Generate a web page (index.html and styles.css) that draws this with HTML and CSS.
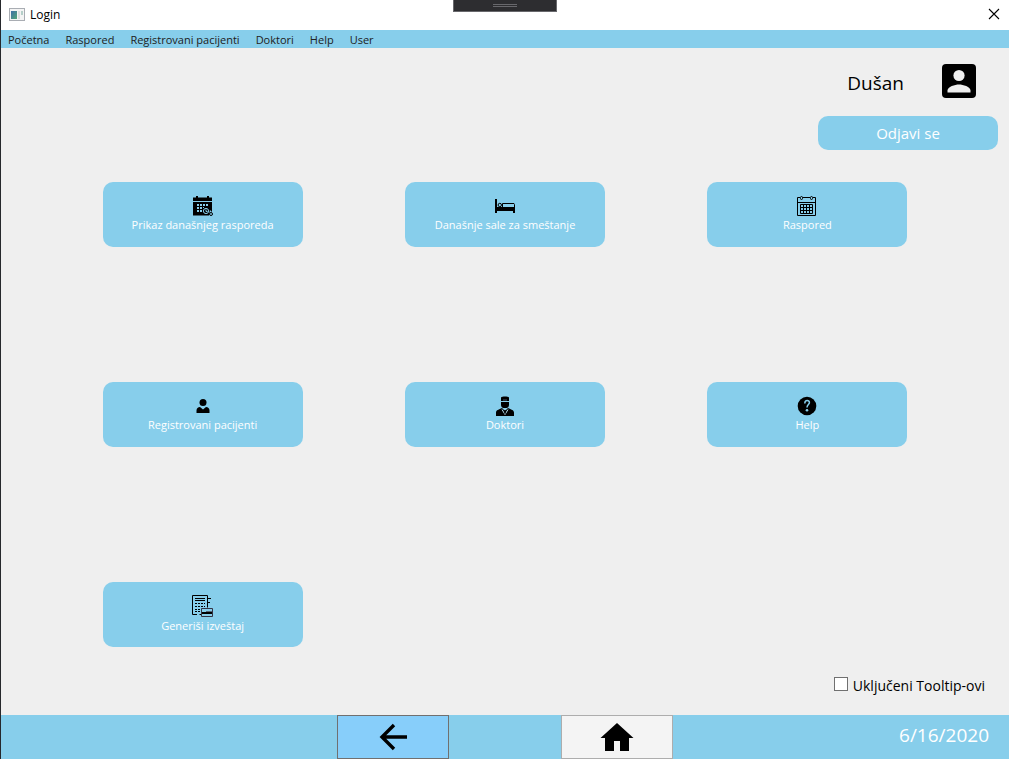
FILE: index.html
```html
<!DOCTYPE html>
<html lang="sr-Latn">
<head>
<meta charset="utf-8">
<title>Login</title>
<link rel="stylesheet" href="styles.css">
</head>
<body>
<div class="window">
  <header class="titlebar">
    <svg class="app-icon" width="16" height="13" viewBox="0 0 16 13" aria-hidden="true">
      <defs><linearGradient id="pane" x1="0" y1="0" x2="1" y2="1"><stop offset="0" stop-color="#3f6fa8"/><stop offset="1" stop-color="#55a777"/></linearGradient></defs>
      <rect x=".5" y=".5" width="15" height="12" fill="#f4f4f4" stroke="#a9adb3"/>
      <rect x="2" y="3" width="6" height="8" fill="url(#pane)"/>
      <rect x="9" y="3" width="2" height="8" fill="#dedede"/>
      <rect x="12" y="3" width="2" height="4" fill="#b5cfc9"/>
    </svg>
    <span class="title">Login</span>
    <button class="close" aria-label="Close"><svg width="12" height="12" viewBox="0 0 12 12"><path d="M1 1l10 10M11 1L1 11" stroke="#000" stroke-width="1.1"/></svg></button>
    <div class="debug-tab"><svg width="24" height="4" viewBox="0 0 24 4"><path d="M0 .5h24M0 2.5h24" stroke="#68686c"/></svg></div>
  </header>
  <nav class="menu">
    <a href="#">Početna</a><a href="#">Raspored</a><a href="#">Registrovani pacijenti</a><a href="#">Doktori</a><a href="#">Help</a><a href="#">User</a>
  </nav>
  <main class="content">
    <section class="account">
      <div class="user">
        <span class="name">Dušan</span>
        <svg width="34" height="34" viewBox="0 0 34 34" aria-hidden="true"><rect width="34" height="34" rx="4"/><circle cx="17" cy="11.500" r="5.600" fill="#efefef"/><path d="M5.500 28.500v-2c0-3.800 7.500-6 11.500-6s11.500 2.200 11.500 6v2z" fill="#efefef"/></svg>
      </div>
      <button class="logout">Odjavi se</button>
    </section>
    <section class="tiles">
      <button class="tile">
        <svg width="20" height="20" viewBox="0 0 20 20" aria-hidden="true"><path d="M0 1.500h3V0h2v1.500h9V0h2v1.500h3V5H0zM0 6h19v10l-2-2-1 5.500H0z"/><path d="M4 8h2v2H4zM7 8h2v2H7zM10 8h2v2h-2zM13 8h2v2h-2zM4 11h2v2H4zM7 11h2v2H7zM4 14h2v2H4zM7 14h2v2H7zM10 11h1v1h-1z" fill="#87ceeb"/><circle cx="13" cy="15" r="2.600" fill="#000" stroke="#87ceeb"/><path d="M13 13.500v2h1.500" fill="none" stroke="#87ceeb"/><circle cx="18" cy="18" r="1.500" fill="#87ceeb" stroke="#000"/></svg>
        <span>Prikaz današnjeg rasporeda</span>
      </button>
      <button class="tile">
        <svg width="20" height="20" viewBox="0 0 20 20" aria-hidden="true"><path d="M0 3h2v8h18v6h-2v-2H2v2H0z"/><circle cx="4.800" cy="9" r="1.700" fill="none" stroke="#000"/><path d="M7.500 11V7.500H19l.5 1V12" fill="none" stroke="#000"/></svg>
        <span>Današnje sale za smeštanje</span>
      </button>
      <button class="tile">
        <svg width="20" height="20" viewBox="0 0 20 20" aria-hidden="true"><g fill="none" stroke="#000"><path d="M3 1.500H.5v18h18v-18H16M5.500 1.500H13M.5 6.500h18"/><rect x="3.500" y=".5" width="2" height="3" rx="1"/><rect x="13.500" y=".5" width="2" height="3" rx="1"/><path d="M3.500 8.500h12v9h-12zM3.500 11.500h12M3.500 14.500h12M6.500 8.500v9M9.500 8.500v9M12.500 8.500v9"/></g></svg>
        <span>Raspored</span>
      </button>
      <button class="tile">
        <svg width="20" height="20" viewBox="0 0 20 20" aria-hidden="true"><circle cx="10" cy="6.500" r="3.500"/><path d="M3.500 17v-2.500C3.500 12 5 11.200 7 11l3 2.500 3-2.500c2 .2 3.500 1 3.500 3.500V17z"/></svg>
        <span>Registrovani pacijenti</span>
      </button>
      <button class="tile">
        <svg width="20" height="20" viewBox="0 0 20 20" aria-hidden="true"><path d="M6 1.500C7 .3 13 .3 14 1.500V5H6zM6 6h8v3c0 1.800-1.500 3-2.500 3h-3C7.500 12 6 10.800 6 9zM1 20v-3.500C1 14 4 13.500 7 12l3 3 3-3c3 1.500 6 2 6 4.500V20z"/><path d="M8 4h4" stroke="#456"/><path d="M7 13.500l3 5 3-5" fill="none" stroke="#b9e0f0"/><path d="M9.200 14h1.600l-.3 4h-1z"/></svg>
        <span>Doktori</span>
      </button>
      <button class="tile">
        <svg width="20" height="20" viewBox="0 0 20 20" aria-hidden="true"><circle cx="10" cy="10" r="9.300"/><path d="M7.800 7.500c0-4.200 5-3.500 4.600-.7-.3 1.700-2.400 2-2.400 4.700" fill="none" stroke="#87ceeb" stroke-width="1.500"/><circle cx="10" cy="14.300" r="1.300" fill="#87ceeb"/></svg>
        <span>Help</span>
      </button>
      <button class="tile">
        <svg width="22" height="22" viewBox="0 0 22 22" aria-hidden="true"><g fill="none" stroke="#000"><path d="M9 19.500H7.500M5 19.500H.5V.5h15v12M15.500 3.500H19M15.500 7.500H18M3 3.500h10M3 5.500h10"/><path d="M3 8.500h10M3 11.500h10M3 14.500h5M3 16.500h5" stroke-dasharray="2 1"/><path d="M9.500 13.500h11v8h-11z" fill="#87ceeb" stroke="#334"/><path d="M14 16.500h6" stroke="#567"/><path d="M10 18h10" stroke-width="2"/></g></svg>
        <span>Generiši izveštaj</span>
      </button>
    </section>
    <label class="tooltips"><input type="checkbox"><span>Uključeni Tooltip-ovi</span></label>
  </main>
  <footer class="bottombar">
    <button class="back" aria-label="Nazad"><svg width="28" height="28" viewBox="0 0 28 28"><path d="M28 14H3M15 2L3 14l12 12" fill="none" stroke="#000" stroke-width="3.400"/></svg></button>
    <button class="home" aria-label="Početna"><svg width="34" height="30" viewBox="0 0 34 30"><path d="M17 1l16.500 15H29v13h-9V19h-6v10H5V16H.5z"/></svg></button>
    <time class="date" datetime="2020-06-16">6/16/2020</time>
  </footer>
</div>
</body>
</html>
```
FILE: styles.css
```css
* { box-sizing: border-box; }
body { margin: 0; font-family: "Open Sans", "Noto Sans", sans-serif; font-size: 11px; color: #000; }
button { font: inherit; border: 0; padding: 0; cursor: pointer; }
svg { display: block; }
.window { min-height: 100vh; display: flex; flex-direction: column; background: #efefef; border-left: 1px solid #26282c; }
.titlebar { position: relative; height: 30px; display: flex; align-items: center; gap: 5px; padding: 0 9px 2px 8px; background: #fff; }
.title { font-size: 12px; }
.close { margin-left: auto; background: none; }
.debug-tab { position: absolute; top: 0; left: 50%; transform: translateX(-50%); width: 104px; height: 12px; display: flex; justify-content: center; align-items: center; background: #2d2d30; border: 1px solid #68686c; border-top: 0; }
.menu { height: 18px; display: flex; align-items: center; gap: 16px; padding: 0 7px; background: #87ceeb; }
.menu a { color: #212121; text-decoration: none; }
.content { flex: 1; display: flex; flex-direction: column; }
.account { display: flex; flex-direction: column; align-items: flex-end; gap: 18px; padding: 16px 11px 0; }
.user { display: flex; align-items: center; gap: 38px; padding-right: 22px; }
.name { padding-top: 4px; font-size: 19px; line-height: 30px; }
.logout { width: 180px; height: 34px; border-radius: 10px; background: #87ceeb; color: #fff; font-size: 15px; }
.tiles { flex: 1; display: grid; grid-template-columns: repeat(3, 1fr); align-content: space-between; justify-items: center; padding: 32px 5% 0; }
.tile { width: 200px; height: 65px; display: flex; flex-direction: column; align-items: center; justify-content: center; border-radius: 10px; background: #87ceeb; color: #fff; line-height: 18px; }
.tooltips { align-self: flex-end; height: 68px; display: flex; align-items: center; gap: 5px; padding: 8px 24px 0 0; font-size: 14px; }
.tooltips input { appearance: none; width: 14px; height: 14px; margin: 0 0 3px; border: 1px solid #707070; background: #fff; }
.tooltips input:checked { background: #707070; }
.bottombar { height: 44px; display: grid; grid-template-columns: repeat(9, 1fr); background: #87ceeb; }
.back, .home { display: flex; align-items: center; justify-content: center; border: 1px solid #707070; }
.back { grid-column: 4; background: #87cefa; }
.home { grid-column: 6; background: #f4f4f4; border-color: #adadad; }
.date { grid-column: 8 / 10; justify-self: end; padding-right: 20px; color: #fff; font-size: 19px; line-height: 40px; }
```
